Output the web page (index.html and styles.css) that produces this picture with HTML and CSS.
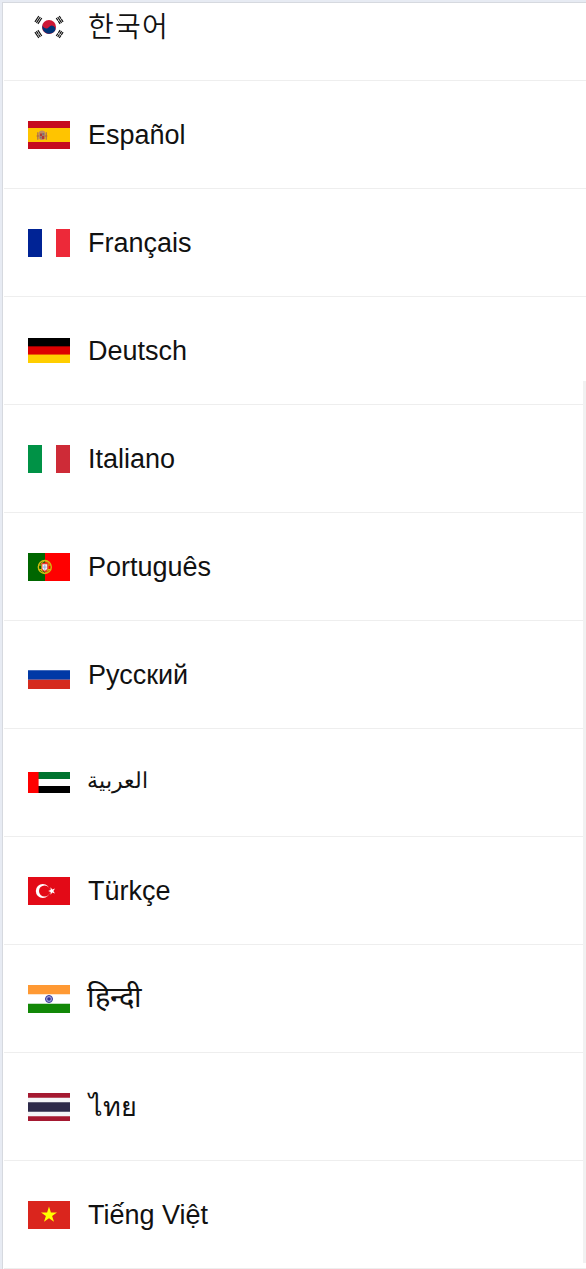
FILE: index.html
```html
<!DOCTYPE html>
<html lang="en">
<head>
<meta charset="utf-8">
<title>Languages</title>
<link rel="stylesheet" href="styles.css">
</head>
<body>
<div class="panel">
<ul class="languages">
<li class="language"><svg class="flag" viewBox="0 0 42 28"><g transform="translate(21 14)" stroke="#111" stroke-width="1.17"><g transform="rotate(33.69)"><path d="M-14.6-3.5v7M-12.8-3.5v7M-11-3.5v7"/><path d="M14.6-3.5v3.2M14.6.3v3.2M12.8-3.5v3.2M12.8.3v3.2M11-3.5v3.2M11 .3v3.2"/></g><g transform="rotate(-33.69)"><path d="M-14.6-3.5v7M-12.8-3.5v3.2M-12.8.3v3.2M-11-3.5v7"/><path d="M14.6-3.5v3.2M14.6.3v3.2M12.8-3.5v7M11-3.5v3.2M11 .3v3.2"/></g></g><circle cx="21" cy="14" r="7" fill="#cd1735"/><path d="M15.2 10.1A3.5 3.5 0 0 0 21 14A3.5 3.5 0 0 1 26.8 17.9A7 7 0 0 1 15.2 10.1Z" fill="#003478"/></svg><span class="name korean" lang="ko">한국어</span></li>
<li class="language"><svg class="flag" viewBox="0 0 42 28"><path fill="#c60b1e" d="M0 0h42v28H0z"/><path fill="#ffc400" d="M0 7h42v14H0z"/><path fill="#bd8a65" d="M11.3 10.5q2.7-2 5.4 0l.6 1.5v5.5q-3.3 3.2-6.6 0V12z"/><path fill="#b13a35" d="M12 12.5h2V15h-2zM14 15h2.2v3H14z"/><path fill="#7d7272" d="M14.3 12h2v2.5h-2zM12 15.5h1.8v2H12z"/><path stroke="#aa7050" stroke-width="1.2" d="M9.8 11.3v7.5M18.3 11.3v7.5"/><path stroke="#b26340" d="M8.6 15h2.7M16.7 15h2.7"/></svg><span class="name" lang="es">Español</span></li>
<li class="language"><svg class="flag" viewBox="0 0 42 28"><path fill="#002395" d="M0 0h14v28H0z"/><path fill="#ed2939" d="M28 0h14v28H28z"/></svg><span class="name" lang="fr">Français</span></li>
<li class="language"><svg class="flag" viewBox="0 0 42 28"><path d="M0 1h42v8.3H0z"/><path fill="#d00" d="M0 9h42v8.6H0z"/><path fill="#ffce00" d="M0 17.5h42V26H0z"/><path fill="#920000" d="M0 9h42v1H0z"/><path fill="#ed5b00" d="M0 17h42v1H0z"/></svg><span class="name" lang="de">Deutsch</span></li>
<li class="language"><svg class="flag" viewBox="0 0 42 28"><path fill="#009246" d="M0 0h14v28H0z"/><path fill="#ce2b37" d="M28 0h14v28H28z"/></svg><span class="name" lang="it">Italiano</span></li>
<li class="language"><svg class="flag" viewBox="0 0 42 28"><path fill="#060" d="M0 0h17v28H0z"/><path fill="red" d="M17 0h25v28H17z"/><g fill="none" stroke="#d0bd13"><circle cx="16.8" cy="14" r="6.5" stroke-width="1.4"/><ellipse cx="16.8" cy="14" rx="3.2" ry="6.4"/><path d="M10.5 12h12.6M10.8 16.5h12M12 9l9.6 10M12 19l9.6-10"/></g><path d="M13.6 9.8h6.4v5.4q-.4 3-3.2 3.8-2.8-.8-3.2-3.8z" fill="#e33b2c"/><path d="M14.4 11.2h4.8v4q-.4 1.8-2.4 2.6-2-.8-2.4-2.6z" fill="#f2f2f6"/><path d="M16.8 11.8v5M15 14.1h3.6" stroke="#8fa9d5" stroke-width=".9"/></svg><span class="name" lang="pt">Português</span></li>
<li class="language"><svg class="flag" viewBox="0 0 42 28"><path fill="#0039a6" d="M0 9.3h42v9.4H0z"/><path fill="#d52b1e" d="M0 18.7h42V28H0z"/></svg><span class="name" lang="ru">Русский</span></li>
<li class="language"><svg class="flag" viewBox="0 0 42 28"><path fill="#00732f" d="M10 3h32v7H10z"/><path d="M10 17h32v7H10z"/><path fill="red" d="M0 3h10.6v21H0z"/></svg><span class="name arabic" lang="ar">العربية</span></li>
<li class="language"><svg class="flag" viewBox="0 0 42 28"><path fill="#e30a17" d="M0 0h42v28H0z"/><circle cx="14.8" cy="14" r="7" fill="#fff"/><circle cx="16.6" cy="14" r="5.6" fill="#e30a17"/><path fill="#fff" d="M20.1 14l2.5-1V10.3l1.7 2.1 2.7-.8-1.6 2.4 1.6 2.4-2.7-.8-1.7 2.1V15z"/></svg><span class="name" lang="tr">Türkçe</span></li>
<li class="language"><svg class="flag" viewBox="0 0 42 28"><path fill="#f93" d="M0 0h42v9.3H0z"/><path fill="#128807" d="M0 18.7h42V28H0z"/><circle cx="21" cy="14" r="3.5" fill="#a5a5db" stroke="#333399"/><circle cx="21" cy="14" r="1.8" fill="#333399"/></svg><span class="name hindi" lang="hi">हिन्दी</span></li>
<li class="language"><svg class="flag" viewBox="0 0 42 28"><path fill="#a51931" d="M0 0h42v28H0z"/><path fill="#f4f5f8" d="M0 4.7h42v18.6H0z"/><path fill="#2d2a4a" d="M0 9.3h42v9.4H0z"/></svg><span class="name thai" lang="th">ไทย</span></li>
<li class="language"><svg class="flag" viewBox="0 0 42 28"><path fill="#da251d" d="M0 0h42v28H0z"/><path fill="#ff0" d="M21 5.6l1.9 5.8H29l-4.9 3.6 1.9 5.8-5-3.6-5 3.6 1.9-5.8-4.9-3.6h6.1z"/></svg><span class="name" lang="vi">Tiếng Việt</span></li>
</ul>
<div class="scrollbar"></div>
</div>
</body>
</html>
```
FILE: styles.css
```css
* { box-sizing: border-box; }
body {
  margin: 0;
  height: 1269px;
  padding: 2px 0 0 2px;
  overflow: hidden;
  background: #e7ebf3;
  color: #111;
  font-family: "Liberation Sans", Arial, sans-serif;
}
.panel {
  position: relative;
  height: 1267px;
  overflow: hidden;
  background: #fff;
  border-top: 1px solid #d6d9df;
  border-left: 1px solid #d6d9df;
}
/* The list is scrolled partway through its first row. */
.languages {
  list-style: none;
  margin: -30px 0 0;
  padding: 0 0 0 1px;
}
.language {
  display: flex;
  align-items: center;
  gap: 18px;
  height: 108px;
  padding: 1px 24px 0;
  border-bottom: 1px solid #eee;
}
.flag { flex: none; width: 42px; height: 28px; }
.name { font-size: 27px; line-height: 32px; white-space: nowrap; }
.korean { font-family: "Noto Sans CJK KR", sans-serif; font-size: 28px; font-weight: 350; letter-spacing: 1.2px; padding-bottom: 5px; }
.arabic { font-size: 21.5px; padding-bottom: 4px; margin-left: -1px; }
.hindi { font-size: 29px; padding-bottom: 4px; margin-left: -1px; }
.thai { font-size: 27px; margin-left: 1px; }
.scrollbar {
  position: absolute;
  top: 378px;
  right: 0;
  width: 3px;
  height: 882px;
  background: #f1f1f1;
}
```
